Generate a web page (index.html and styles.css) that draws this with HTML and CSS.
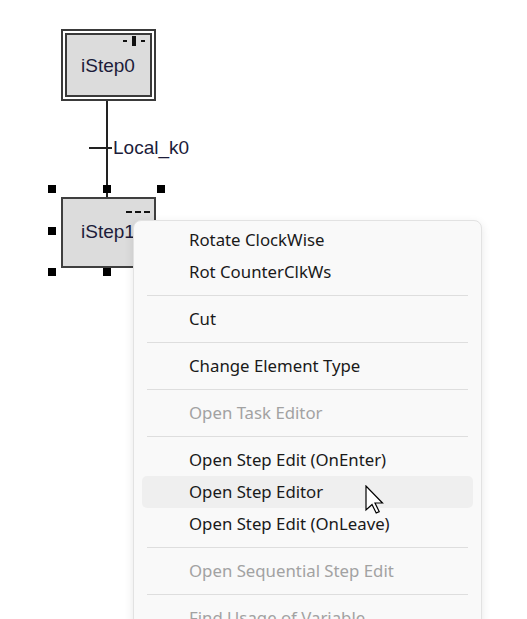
FILE: index.html
```html
<!DOCTYPE html>
<html lang="en">
<head>
    <meta charset="UTF-8">
    <meta name="viewport" content="width=device-width, initial-scale=1.0">
    <title>Step Chart Editor</title>
    <link rel="stylesheet" href="styles.css">
</head>
<body>

<div class="canvas">
    <!-- initial step -->
    <div class="step step-initial">
        <div class="step-inner">
            <div class="mark mark-active"><i></i><b></b><i></i></div>
            <span class="step-name">iStep0</span>
        </div>
    </div>

    <div class="link"></div>
    <div class="trans-bar"></div>
    <span class="trans-name">Local_k0</span>

    <!-- selected step -->
    <div class="step step-selected">
        <div class="mark mark-idle"><i></i><i></i><i></i></div>
        <span class="step-name">iStep1</span>
    </div>

    <div class="handle h-tl"></div>
    <div class="handle h-tm"></div>
    <div class="handle h-tr"></div>
    <div class="handle h-ml"></div>
    <div class="handle h-bl"></div>
    <div class="handle h-bm"></div>
</div>

<div class="menu">
    <div class="menu-item">Rotate ClockWise</div>
    <div class="menu-item">Rot CounterClkWs</div>
    <div class="menu-sep"></div>
    <div class="menu-item">Cut</div>
    <div class="menu-sep"></div>
    <div class="menu-item">Change Element Type</div>
    <div class="menu-sep"></div>
    <div class="menu-item disabled">Open Task Editor</div>
    <div class="menu-sep"></div>
    <div class="menu-item">Open Step Edit (OnEnter)</div>
    <div class="menu-item hover">Open Step Editor</div>
    <div class="menu-item">Open Step Edit (OnLeave)</div>
    <div class="menu-sep"></div>
    <div class="menu-item disabled">Open Sequential Step Edit</div>
    <div class="menu-sep"></div>
    <div class="menu-item disabled">Find Usage of Variable</div>
</div>

<svg class="cursor" width="20" height="30" viewBox="0 0 20 30">
    <path d="M1 1 L1 25 L7 19.5 L11.2 28 L14.2 26.6 L10 18 L17.5 18 Z" fill="#fff" stroke="#000" stroke-width="1.2" stroke-linejoin="miter"/>
</svg>

</body>
</html>
```

FILE: styles.css
```css
* {
    margin: 0;
    padding: 0;
    box-sizing: border-box;
}

body {
    width: 527px;
    height: 619px;
    overflow: hidden;
    position: relative;
    background: #fff;
    font-family: 'Liberation Sans', Arial, sans-serif;
}

.canvas {
    position: absolute;
    left: 0;
    top: 0;
    width: 527px;
    height: 619px;
}

/* steps */
.step {
    position: absolute;
    left: 61px;
    width: 95px;
    color: #1c1c3a;
}

.step-name {
    display: block;
    font-size: 19px;
    line-height: 20px;
}

.step-initial {
    top: 29px;
    height: 72px;
    border: 2px solid #3a3a3a;
    padding: 2px;
    background: #fff;
}

.step-initial .step-inner {
    height: 100%;
    border: 2px solid #3a3a3a;
    background: #dcdcdc;
    padding: 1px 5px 0 14px;
}

.step-initial .step-name {
    margin-top: 10px;
}

.step-selected {
    top: 197px;
    height: 71px;
    border: 2px solid #3f3f3f;
    background: #dcdcdc;
    padding: 8px 4px 0 18px;
}

.step-selected .step-name {
    margin-top: 5px;
}

/* little state marks in the step corner */
.mark {
    height: 10px;
    display: flex;
    justify-content: flex-end;
    align-items: center;
}

.mark i {
    display: block;
    height: 2px;
    background: #111;
}

.mark-active {
    gap: 5px;
}

.mark-active i {
    width: 4px;
}

.mark-active b {
    display: block;
    width: 4px;
    height: 10px;
    background: #111;
}

.mark-idle {
    gap: 3px;
}

.mark-idle i {
    width: 6px;
}

/* link and transition */
.link {
    position: absolute;
    left: 106px;
    top: 101px;
    width: 2px;
    height: 96px;
    background: #222;
}

.trans-bar {
    position: absolute;
    left: 89px;
    top: 147px;
    width: 23px;
    height: 2px;
    background: #222;
}

.trans-name {
    position: absolute;
    left: 113px;
    top: 138px;
    font-size: 19px;
    line-height: 20px;
    color: #1c1c3a;
}

/* selection handles */
.handle {
    position: absolute;
    width: 8px;
    height: 8px;
    background: #000;
}

.h-tl { left: 48px;  top: 185px; }
.h-tm { left: 103px; top: 185px; }
.h-tr { left: 157px; top: 185px; }
.h-ml { left: 48px;  top: 227px; }
.h-bl { left: 48px;  top: 268px; }
.h-bm { left: 103px; top: 268px; }

/* context menu */
.menu {
    position: absolute;
    left: 133px;
    top: 220px;
    width: 349px;
    height: 430px;
    padding: 3px 8px;
    background: #f9f9f9;
    border: 1px solid #e2e2e2;
    border-radius: 8px;
    box-shadow: 0 3px 10px rgba(0, 0, 0, 0.10);
    font-family: 'Noto Sans', 'Open Sans', sans-serif;
    font-size: 16.8px;
    color: #1a1a1a;
}

.menu-item {
    height: 32px;
    line-height: 32px;
    padding-left: 47px;
    border-radius: 5px;
    white-space: nowrap;
}

.menu-item.hover {
    background: #efefef;
}

.menu-item.disabled {
    color: #a2a2a2;
}

.menu-sep {
    height: 15px;
    margin: 0 5px;
    display: flex;
    align-items: center;
}

.menu-sep::after {
    content: '';
    display: block;
    width: 100%;
    height: 1px;
    background: #dedede;
}

.cursor {
    position: absolute;
    left: 365px;
    top: 485px;
}
```
